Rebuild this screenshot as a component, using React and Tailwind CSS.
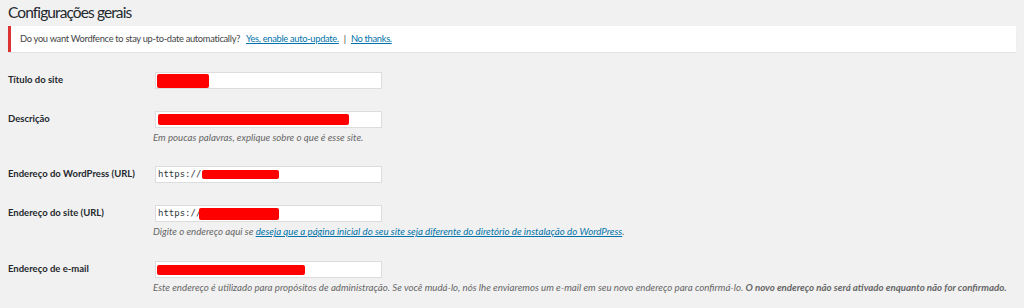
import React from 'react';

const font = { fontFamily: 'Lato, "Noto Sans", sans-serif' };
const mono = { fontFamily: '"DejaVu Sans Mono", monospace' };

function Redacted({ className }) {
    return <span className={`block bg-[#ff0000] rounded-[2px] ${className}`} />;
}

function Field({ children }) {
    return (
        <div className="w-[227px] h-[17px] bg-white border border-[#dddddd] flex items-center overflow-hidden">
            {children}
        </div>
    );
}

function Row({ label, top, children, hint }) {
    return (
        <div className={`flex ${top}`}>
            <div className="w-[155px] pl-2 h-[17px] flex items-center text-[9.5px] font-bold text-[#23282d]">{label}</div>
            <div className="flex flex-col">
                {children}
                {hint && <p className="mt-[1px] -ml-[2px] leading-[16px] text-[9.7px] italic text-[#666666] whitespace-nowrap">{hint}</p>}
            </div>
        </div>
    );
}

export default function App() {
    return (
        <div className="w-[1024px] h-[308px] bg-[#f1f1f1] overflow-hidden" style={font}>
            <h1 className="pl-2 pt-[1px] h-[26px] text-[15.5px] leading-[22px] tracking-[-0.9px] text-[#23282d]">Configurações gerais</h1>
            <div className="ml-2 mr-2 h-[26px] bg-white border-l-[3px] border-[#dc3232] shadow-[0_1px_1px_rgba(0,0,0,0.06)] flex items-center pl-[9px] text-[9.3px] tracking-[-0.3px] text-[#444444]">
                <span>Do you want Wordfence to stay up-to-date automatically?</span>
                <a className="ml-[6px] text-[#0073aa] underline">Yes, enable auto-update.</a>
                <span className="mx-[5px] text-[#444444]">|</span>
                <a className="text-[#0073aa] underline">No thanks.</a>
            </div>

            <Row label="Título do site" top="mt-[20px]">
                <Field><Redacted className="ml-[1px] w-[52px] h-[14px]" /></Field>
            </Row>
            <Row label="Descrição" top="mt-[22px]" hint="Em poucas palavras, explique sobre o que é esse site.">
                <Field><Redacted className="ml-[2px] w-[191px] h-[11px]" /></Field>
            </Row>
            <Row label="Endereço do WordPress (URL)" top="mt-[21px]">
                <Field>
                    <span className="pl-[2px] text-[9px] text-[#32373c]" style={mono}>https://</span>
                    <Redacted className="ml-[1px] w-[77px] h-[9px]" />
                </Field>
            </Row>
            <Row
                label="Endereço do site (URL)"
                top="mt-[22px]"
                hint={<>Digite o endereço aqui se <a className="text-[#0073aa] underline">deseja que a página inicial do seu site seja diferente do diretório de instalação do WordPress</a>.</>}
            >
                <Field>
                    <span className="pl-[2px] text-[9px] text-[#32373c]" style={mono}>https://</span>
                    <Redacted className="-ml-[2px] w-[80px] h-[12px]" />
                </Field>
            </Row>
            <Row
                label="Endereço de e-mail"
                top="mt-[22px]"
                hint={<>Este endereço é utilizado para propósitos de administração. Se você mudá-lo, nós lhe enviaremos um e-mail em seu novo endereço para confirmá-lo. <strong>O novo endereço não será ativado enquanto não for confirmado.</strong></>}
            >
                <Field><Redacted className="ml-[1px] w-[148px] h-[10px]" /></Field>
            </Row>
        </div>
    );
}
